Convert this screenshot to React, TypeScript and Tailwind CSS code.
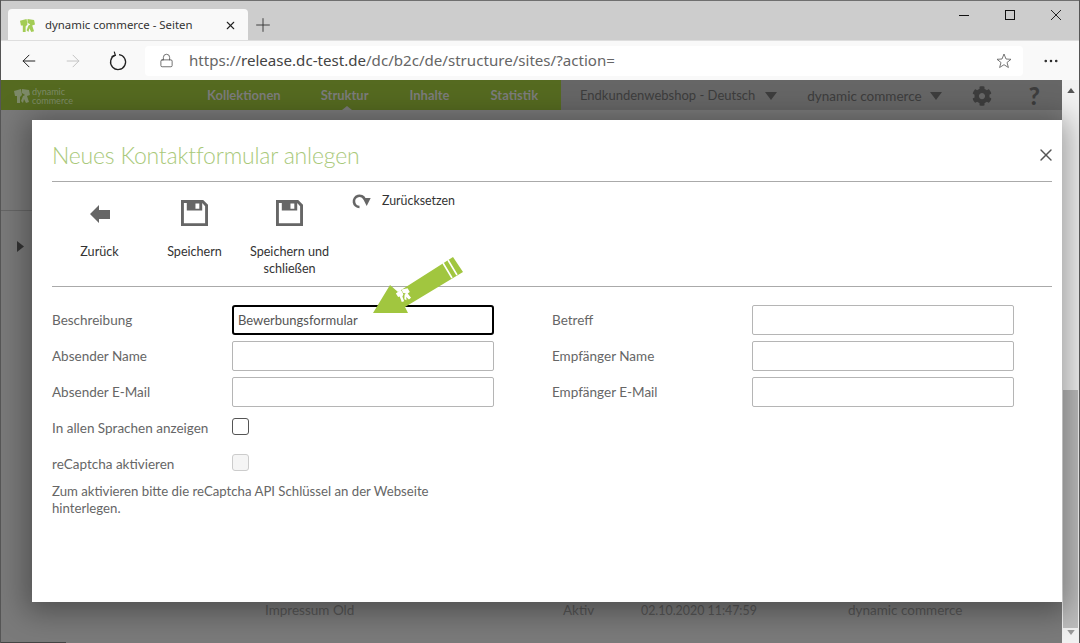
import { ArrowLeft, ArrowRight, Lock, MoreHorizontal, Plus, X } from 'lucide-react';
import { FaCog } from 'react-icons/fa';

const chromeFont = 'font-["Noto_Sans",sans-serif]';
const logoLeft = 'M0 3 7 1 8 7 6 9 6 15 3 15 3 8 1 8Z';
const logoRight = 'M8 1 15 2 16 7 13 8 15 14 12 15 10 11 9 15 7 13 9 8 11 7 8 5Z';

function Favicon({ className }: { className: string }) {
  return (
    <svg viewBox="0 0 16 16" className={className}>
      <path d={logoLeft} fill="currentColor" />
      <path d={logoRight} fill="currentColor" />
    </svg>
  );
}

function Caret({ className }: { className: string }) {
  return (
    <svg viewBox="0 0 12 8" className={className}>
      <polygon points="0,0 12,0 6,8" fill="currentColor" />
    </svg>
  );
}

function SaveIcon() {
  return (
    <svg viewBox="0 0 28 28" className="h-[27px] w-[27px] text-[#666]">
      <path
        fill="currentColor"
        fillRule="evenodd"
        d="M0 0H23L28 5V27H0ZM3 3V24H25V6.5L22 3V11H6V3ZM15 3.5V9H19V3.5Z"
      />
    </svg>
  );
}

function BackIcon() {
  return (
    <svg viewBox="0 0 20 18" className="h-[18px] w-5 text-[#666]">
      <polygon points="0,9 9,0 9,5 20,5 20,14 9,14 9,18" fill="currentColor" />
    </svg>
  );
}

function ResetIcon() {
  return (
    <svg viewBox="0 0 19 16" className="h-4 w-[19px] text-[#666]">
      <path d="M7.5 14A5.6 5.6 0 1 1 12.6 6" fill="none" stroke="currentColor" strokeWidth="2.6" />
      <polygon points="10.7,5 18.7,5 14.7,13" fill="currentColor" />
    </svg>
  );
}

function ReloadIcon() {
  return (
    <svg viewBox="0 0 20 20" className="h-5 w-5 text-[#222]">
      <path d="M11 3.6A7.5 7.5 0 1 1 7 4.2" fill="none" stroke="currentColor" strokeWidth="1.3" />
      <path d="M6.2 0.6 7.4 4.4 3.6 5.6" fill="none" stroke="currentColor" strokeWidth="1.2" />
    </svg>
  );
}

function Field({ label, value, focused, labelWidth }: { label: string; value?: string; focused?: boolean; labelWidth: string }) {
  return (
    <div className="flex h-[30px] items-center">
      <label className={`pt-[2px] text-[#666] ${labelWidth}`}>{label}</label>
      <input
        readOnly
        value={value ?? ''}
        className={
          focused
            ? 'h-[30px] w-[262px] rounded-[3px] border-2 border-black bg-white px-1 text-[13px] text-[#555] outline-none'
            : 'h-[30px] w-[262px] rounded-[2px] border border-[#b5b5b5] bg-white px-1.5 outline-none'
        }
      />
    </div>
  );
}

function ToolButton({ icon, label, width }: { icon: React.ReactNode; label: string; width: string }) {
  return (
    <button className={`flex flex-col items-center text-center text-[12.6px] leading-[17px] text-[#333] ${width}`}>
      <span className="flex h-[27px] items-center">{icon}</span>
      <span className="mt-[16px]">{label}</span>
    </button>
  );
}

export default function App() {
  return (
    <div className="relative flex h-[643px] w-[1080px] flex-col overflow-hidden border-x border-[#555] bg-[#7a7a7a]">
      {/* browser tab strip */}
      <div className={`flex h-10 shrink-0 items-end border-t border-[#6f6f6f] bg-[#cdcdcd] pl-[7px] ${chromeFont}`}>
        <div className="flex h-[31px] w-[240px] items-center rounded-t-[4px] bg-[#f9f9f9] pl-3 pr-[11px] pt-px text-[11.4px] text-[#333]">
          <Favicon className="h-[15px] w-[15px] text-[#a3cc55]" />
          <span className="ml-[10px] flex-1">dynamic commerce - Seiten</span>
          <X size={13} strokeWidth={2} className="text-[#222]" />
        </div>
        <Plus size={22} strokeWidth={1} className="mb-1 ml-1 text-[#333]" />
        <div className="mb-5 ml-auto flex h-[10px] items-center gap-9 pr-[18px]">
          <span className="h-px w-[10px] bg-[#111]" />
          <span className="h-[10px] w-[10px] border border-[#111]" />
          <svg viewBox="0 0 10 10" className="h-[10px] w-[10px] text-[#111]">
            <path d="M0 0 10 10M10 0 0 10" stroke="currentColor" strokeWidth="0.9" />
          </svg>
        </div>
      </div>

      {/* address bar */}
      <div className={`flex h-10 shrink-0 items-center border-t border-[#dedede] bg-[#f9f9f9] pl-[18px] ${chromeFont}`}>
        <ArrowLeft size={20} strokeWidth={1.2} className="text-[#222]" />
        <ArrowRight size={20} strokeWidth={1.2} className="ml-[24px] text-[#c4c4c4]" />
        <span className="ml-[25px]">
          <ReloadIcon />
        </span>
        <div className="ml-[17px] flex h-[30px] w-[878px] items-center rounded-[4px] bg-white pl-[14px] pr-[11px]">
          <Lock size={15} strokeWidth={1.2} className="text-[#444]" />
          <span className="ml-[15px] flex-1 text-[15.1px] text-[#666]">
            https://<span className="text-[#444]">release.dc-test.de</span>/dc/b2c/de/structure/sites/?action=
          </span>
          <svg viewBox="0 0 16 16" className="h-4 w-4 text-[#666]">
            <polygon
              points="8,1 10,6 15,6.3 11,9.5 12.4,14.5 8,11.7 3.6,14.5 5,9.5 1,6.3 6,6"
              fill="none"
              stroke="currentColor"
              strokeWidth="0.9"
            />
          </svg>
        </div>
        <MoreHorizontal size={18} strokeWidth={1.4} className="ml-[19px] text-[#222]" />
      </div>

      {/* page behind the modal, dimmed */}
      <div className="relative flex min-h-0 flex-1 font-['Lato',sans-serif]">
        <div className="flex min-w-0 flex-1 flex-col">
          <nav className="flex h-[30px] shrink-0 bg-[#556a20] text-[13px] font-bold text-[#7c7c7c]">
            <div className="relative flex w-[560px] items-center pl-[13px] pt-[2px]">
              <Favicon className="h-4 w-4 text-[#7d8a68]" />
              <span className="ml-[2px] w-[40px] text-[9px] leading-[9px] font-normal text-[#7d8a68]">dynamic commerce</span>
              <span className="ml-[135px]">Kollektionen</span>
              <span className="ml-[40px]">Struktur</span>
              <span className="ml-[41px]">Inhalte</span>
              <span className="ml-[41px]">Statistik</span>
              <span className="absolute bottom-0 left-[341px] h-0 w-0 border-x-[5px] border-b-[4px] border-x-transparent border-b-[#7a7a7a]" />
            </div>
            <div className="flex flex-1 items-center bg-[#666] pl-[19px] pt-[2px] font-normal text-[#3d3d3d]">
              <span>Endkundenwebshop - Deutsch</span>
              <Caret className="ml-[10px] h-2 w-3" />
              <span className="ml-[30px] text-[13.5px]">dynamic commerce</span>
              <Caret className="ml-[8px] h-2 w-3" />
              <FaCog size={20} className="ml-[30px]" />
              <span className="ml-[37px] text-2xl leading-none font-black">?</span>
            </div>
          </nav>
          <div className="h-[101px] shrink-0 border-b border-[#666]" />
          <div className="flex h-[70px] shrink-0 items-center pl-4">
            <svg viewBox="0 0 7 11" className="h-[11px] w-[7px] text-[#333]">
              <polygon points="0,0 7,5.5 0,11" fill="currentColor" />
            </svg>
          </div>
          <div className="mt-auto flex h-[22px] items-center text-[13.5px] text-[#555]">
            <span className="ml-[264px] w-[298px]">Impressum Old</span>
            <span className="w-[78px]">Aktiv</span>
            <span className="w-[207px] pt-[2px] text-[12.4px]">02.10.2020 11:47:59</span>
            <span>dynamic commerce</span>
          </div>
          <div className="h-[22px] shrink-0" />
        </div>
        <aside className="flex w-[17px] shrink-0 flex-col items-center justify-between bg-[#f1f1f1] py-2">
          <Caret className="h-[5px] w-2 rotate-180 text-[#555]" />
          <Caret className="h-[5px] w-2 text-[#999]" />
        </aside>
        <div className="absolute right-[1px] bottom-[15px] h-[238px] w-[15px] bg-[#bcbcbc]" />
        <div className="absolute bottom-0 left-0 h-px w-[65px] bg-[#444]" />

        {/* modal */}
        <section className="absolute top-[40px] left-[31px] flex h-[482px] w-[1030px] flex-col bg-white pl-5 pr-[10px] text-sm shadow-[0_4px_28px_6px_rgba(0,0,0,0.35)]">
          <header className="flex h-[62px] shrink-0 items-center justify-between border-b border-[#aaa] pt-[9px]">
            <h2 className="text-[23px] font-light tracking-[-0.2px] text-[#a9c97a]">Neues Kontaktformular anlegen</h2>
            <X size={20} strokeWidth={1.7} className="mr-[-4px] text-[#555]" />
          </header>

          <div className="flex h-[105px] shrink-0 items-start border-b border-[#aaa] pt-[18px]">
            <ToolButton icon={<BackIcon />} label="Zurück" width="w-[95px]" />
            <ToolButton icon={<SaveIcon />} label="Speichern" width="w-[95px]" />
            <ToolButton icon={<SaveIcon />} label="Speichern und schließen" width="w-[95px]" />
            <button className="mt-[-8px] ml-[15px] flex items-center text-[12.4px] text-[#333]">
              <ResetIcon />
              <span className="ml-[11px]">Zurücksetzen</span>
            </button>
          </div>

          <form className="mt-[18px] grid w-[962px] grid-cols-[500px_462px] text-[13.5px] text-[#666]">
            <div className="flex flex-col gap-[6px]">
              <Field label="Beschreibung" value="Bewerbungsformular" focused labelWidth="w-[180px]" />
              <Field label="Absender Name" labelWidth="w-[180px]" />
              <Field label="Absender E-Mail" labelWidth="w-[180px]" />
              <div className="flex h-[30px] items-center">
                <span className="w-[180px] pt-[2px]">In allen Sprachen anzeigen</span>
                <span className="mb-[3px] h-[17px] w-[17px] rounded-[3px] border border-[#555] bg-white" />
              </div>
              <div className="flex h-[30px] items-center">
                <span className="w-[180px] pt-[2px]">reCaptcha aktivieren</span>
                <span className="mb-[3px] h-[17px] w-[17px] rounded-[3px] border border-[#ccc] bg-[#f5f5f5]" />
              </div>
              <p className="-mt-[2px] w-[400px] text-[13.2px] leading-[17px]">Zum aktivieren bitte die reCaptcha API Schlüssel an der Webseite hinterlegen.</p>
            </div>
            <div className="flex flex-col gap-[6px]">
              <Field label="Betreff" labelWidth="w-[200px]" />
              <Field label="Empfänger Name" labelWidth="w-[200px]" />
              <Field label="Empfänger E-Mail" labelWidth="w-[200px]" />
            </div>
          </form>
        </section>

        {/* green pointer over the first field */}
        <svg viewBox="0 0 170 90" className="absolute top-[170px] left-[339px] h-[90px] w-[170px]">
          <polygon points="33,63 50,35 58,42 113,7 123,22 65,57 68,63" fill="#a1c63f" />
          <path d="M103 13 112 28M108 10 117 25" stroke="#fff" strokeWidth="1.6" />
          <g transform="translate(55 41) rotate(-20) scale(0.85)" fill="#fff">
            <path d={logoLeft} />
            <path d={logoRight} />
          </g>
        </svg>
      </div>
    </div>
  );
}
